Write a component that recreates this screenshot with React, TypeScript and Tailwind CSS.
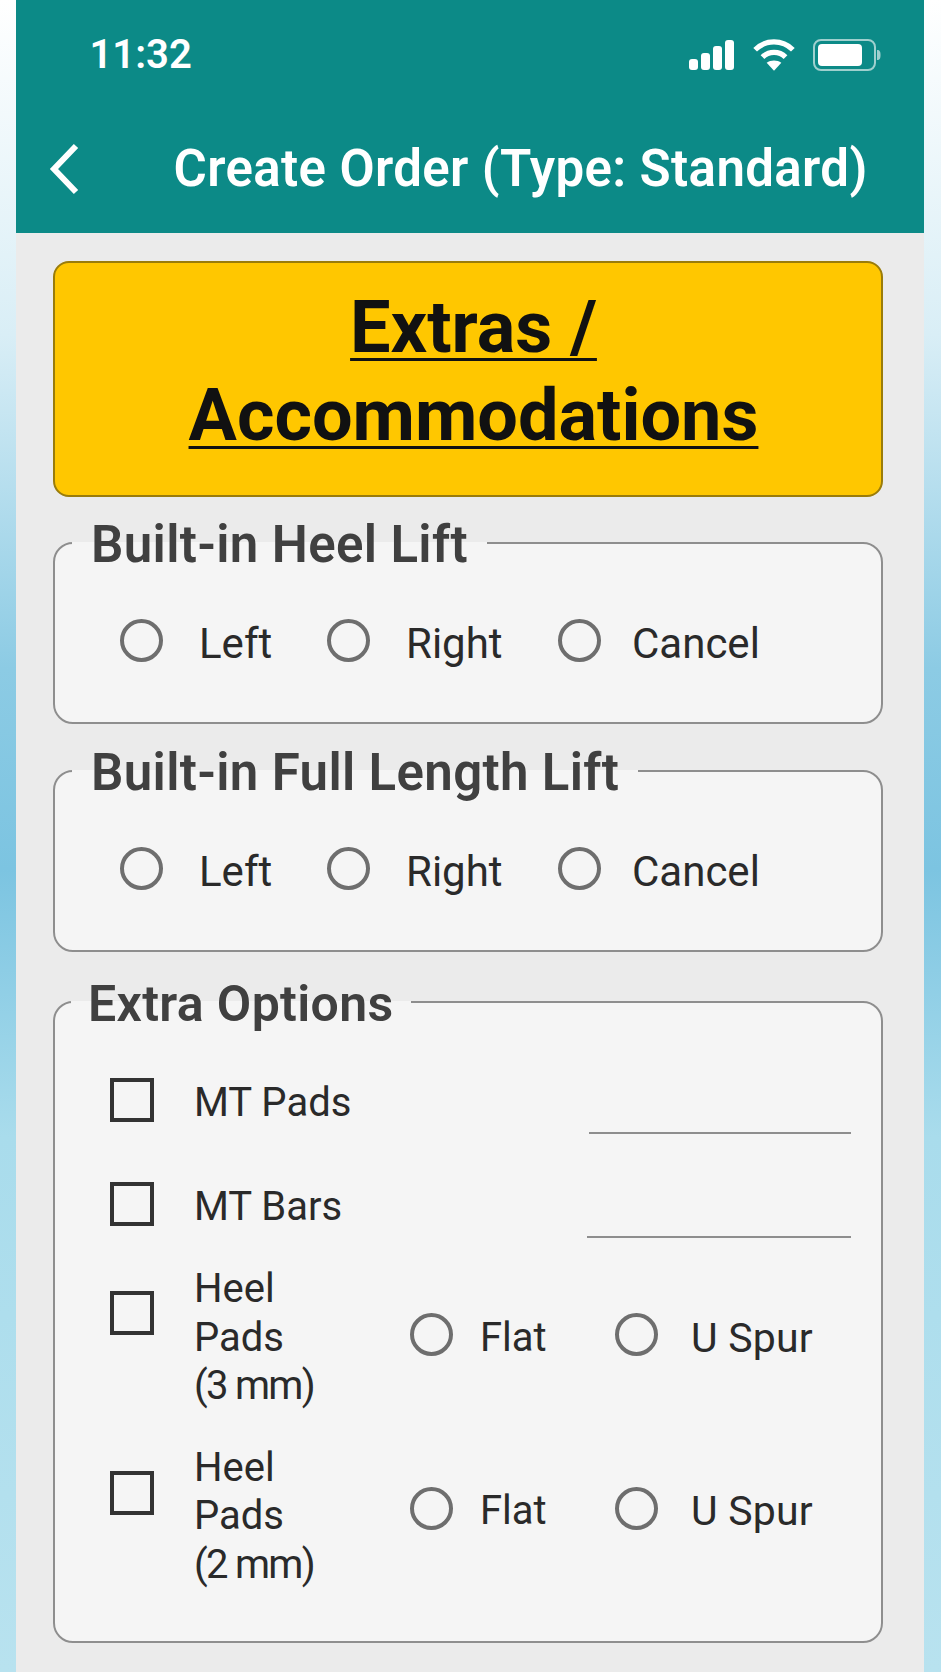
import React from "react";

function Ring({ className = "" }: { className?: string }) {
  return <span className={`block h-[43px] w-[43px] shrink-0 rounded-full border-[4px] border-[#6e6e6e] ${className}`} />;
}

function Radio({ label, gap }: { label: string; gap: string }) {
  return (
    <div className="flex items-center">
      <Ring className="-mt-[2px]" />
      <span className={`${gap} mt-[6px] text-[42px] leading-[48px] text-[#2a2a2a]`}>{label}</span>
    </div>
  );
}

function Box() {
  return <span className="block h-[44px] w-[44px] shrink-0 border-[4.5px] border-[#333333]" />;
}

function Group({ title, legendClass, children, className }: { title: string; legendClass: string; children: React.ReactNode; className: string }) {
  return (
    <fieldset className={`rounded-[20px] border-[2.5px] border-[#8e8e8e] bg-[#f5f5f5] ${className}`}>
      <legend className={`leading-[54px] font-semibold tracking-[0.35px] text-[#404040] ${legendClass}`}>
        <span className="relative top-[2px]">{title}</span>
      </legend>
      {children}
    </fieldset>
  );
}

function LiftOptions() {
  return (
    <div className="mt-[44px] grid grid-cols-[207px_231px_1fr] pl-[65px]">
      <Radio label="Left" gap="ml-[36px]" />
      <Radio label="Right" gap="ml-[36px]" />
      <Radio label="Cancel" gap="ml-[31px]" />
    </div>
  );
}

function HeelRow({ lines, className, boxClass, radioClass }: { lines: string[]; className: string; boxClass: string; radioClass: string }) {
  return (
    <div className={`flex items-center ${className}`}>
      <div className={`w-[84px] ${boxClass}`}>
        <Box />
      </div>
      <div className="w-[216px] text-[40px] leading-[48.5px] text-[#2a2a2a]">
        <div>{lines[0]}</div>
        <div>{lines[1]}</div>
        <div className="tracking-[-1.7px]">{lines[2]}</div>
      </div>
      <div className={`flex items-center ${radioClass}`}>
        <div className="w-[205px]">
          <div className="flex items-center">
            <Ring />
            <span className="ml-[27px] mt-[6px] text-[40px] leading-[48px] text-[#2a2a2a]">Flat</span>
          </div>
        </div>
        <div className="flex items-center">
          <Ring />
          <span className="ml-[33px] mt-[6px] text-[41px] leading-[48px] tracking-[0.2px] text-[#2a2a2a]">U Spur</span>
        </div>
      </div>
    </div>
  );
}

export default function App() {
  return (
    <div
      className="h-[1672px] w-[941px] overflow-hidden pl-[15.5px] pr-[17.5px] bg-[linear-gradient(180deg,#ffffff_0%,#d9eef6_20%,#8ccbe4_40%,#7cc4e1_52%,#a9dcec_68%,#b8e2ef_100%)]"
      style={{ fontFamily: "Roboto, 'Noto Sans', sans-serif" }}
    >
      <div className="flex h-full flex-col bg-[#ebebeb]">
        <header className="h-[233px] shrink-0 bg-[#0c8a87] text-white">
          <div className="flex items-center justify-between pl-[74px] pr-[43px] pt-[30px]">
            <span className="text-[40px] leading-[50px] font-semibold">11:32</span>
            <div className="flex items-center gap-[17px]">
              <svg width="46" height="32" viewBox="0 0 46 32" fill="#fff">
                <rect x="0" y="20" width="9" height="11" rx="3" />
                <rect x="12" y="14" width="9" height="17" rx="3" />
                <rect x="24" y="7" width="9" height="24" rx="3" />
                <rect x="36" y="1" width="9" height="30" rx="3" />
              </svg>
              <svg width="44" height="34" viewBox="0 0 42 32" fill="none" stroke="#fff" strokeWidth="5">
                <path d="M3 11C13 1 29 1 39 11" />
                <path d="M10 18C16 12 26 12 32 18" />
                <path d="M21 31L14 23.5C18 20.5 24 20.5 28 23.5Z" fill="#fff" stroke="none" />
              </svg>
              <svg width="68" height="32" viewBox="0 0 68 32" fill="none">
                <rect x="1" y="1" width="61" height="30" rx="7" stroke="#9fd0ce" strokeWidth="2" />
                <rect x="5" y="5" width="44" height="22" rx="4" fill="#fff" />
                <path d="M64 11c3 0 3.500 2 3.500 5s-.5 5-3.500 5Z" fill="#9fd0ce" />
              </svg>
            </div>
          </div>
          <div className="mt-[59px] flex items-center pl-[32px]">
            <svg width="32" height="52" viewBox="0 0 32 52" fill="none" stroke="#fff" strokeWidth="6">
              <path d="M28 3L6 26L28 49" />
            </svg>
            <h1 className="ml-[94px] text-[51px] leading-[60px] font-semibold tracking-[0.37px] whitespace-nowrap">Create Order (Type: Standard)</h1>
          </div>
        </header>
        <main className="flex flex-col pl-[37.5px] pr-[40.5px] pt-[28px]">
          <div className="h-[236px] rounded-[16px] border-[2px] border-[#9a7c0a] bg-[#ffc700] pl-[11px] pt-[21px] text-center text-[72px] leading-[88px] font-bold text-[#111111] underline decoration-[3px] underline-offset-[6px]">
            <div>Extras /</div>
            <div>Accommodations</div>
          </div>
          <Group title="Built-in Heel Lift" legendClass="ml-[17px] px-[19px] text-[51px]" className="mt-[19px] h-[208px]">
            <LiftOptions />
          </Group>
          <Group title="Built-in Full Length Lift" legendClass="ml-[17px] px-[19px] text-[51px]" className="mt-[20px] h-[208px]">
            <LiftOptions />
          </Group>
          <Group title="Extra Options" legendClass="ml-[16px] px-[17px] text-[50px]" className="mt-[23px] h-[668px]">
            <div className="mt-[36px] flex h-[70px] items-center pl-[55px]">
              <Box />
              <span className="ml-[40px] mt-[5px] text-[40px] leading-[48px] text-[#2a2a2a]">MT Pads</span>
              <div className="ml-auto mr-[30px] mt-[66px] h-[2px] w-[262px] bg-[#8e8e8e]" />
            </div>
            <div className="mt-[34px] flex h-[70px] items-center pl-[55px]">
              <Box />
              <span className="ml-[40px] mt-[5px] text-[40px] leading-[48px] text-[#2a2a2a]">MT Bars</span>
              <div className="ml-auto mr-[30px] mt-[66px] h-[2px] w-[264px] bg-[#8e8e8e]" />
            </div>
            <HeelRow lines={["Heel", "Pads", "(3 mm)"]} className="mt-[26px] pl-[55px]" boxClass="-mt-[50px]" radioClass="-mt-[6px]" />
            <HeelRow lines={["Heel", "Pads", "(2 mm)"]} className="mt-[33px] pl-[55px]" boxClass="-mt-[46px]" radioClass="-mt-[16px]" />
          </Group>
        </main>
      </div>
    </div>
  );
}
